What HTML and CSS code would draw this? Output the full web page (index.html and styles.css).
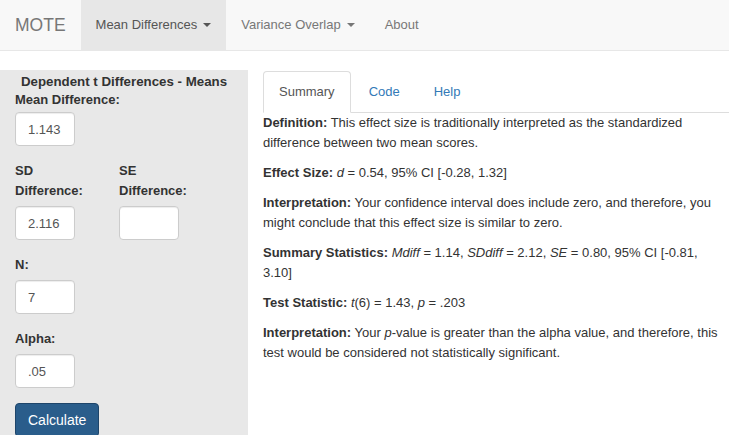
FILE: index.html
```html
<!DOCTYPE html>
<html lang="en">
<head>
<meta charset="utf-8">
<title>MOTE</title>
<link rel="stylesheet" href="styles.css">
</head>
<body>
<nav class="navbar">
  <a class="brand">MOTE</a>
  <ul class="nav">
    <li class="nav-item active"><a>Mean Differences<span class="caret"></span></a></li>
    <li class="nav-item"><a>Variance Overlap<span class="caret"></span></a></li>
    <li class="nav-item"><a>About</a></li>
  </ul>
</nav>
<div class="layout">
  <aside class="sidebar">
    <div class="side-title">Dependent t Differences - Means</div>
    <div class="group first">
      <label class="lbl">Mean Difference:</label>
      <input class="field" type="text" value="1.143">
    </div>
    <div class="pair">
      <div class="col">
        <div class="group">
          <label class="lbl narrow">SD Difference:</label>
          <input class="field" type="text" value="2.116">
        </div>
      </div>
      <div class="col">
        <div class="group">
          <label class="lbl narrow">SE Difference:</label>
          <input class="field" type="text" value="">
        </div>
      </div>
    </div>
    <div class="group">
      <label class="lbl">N:</label>
      <input class="field" type="text" value="7">
    </div>
    <div class="group">
      <label class="lbl">Alpha:</label>
      <input class="field" type="text" value=".05">
    </div>
    <button class="btn" type="button">Calculate</button>
  </aside>
  <main class="main">
    <ul class="tabs">
      <li class="tab active"><a>Summary</a></li>
      <li class="tab"><a>Code</a></li>
      <li class="tab"><a>Help</a></li>
    </ul>
    <div class="tab-content">
      <p><b>Definition:</b> This effect size is traditionally interpreted as the standardized difference between two mean scores.</p>
      <p><b>Effect Size:</b> <i>d</i> = 0.54, 95% CI [-0.28, 1.32]</p>
      <p><b>Interpretation:</b> Your confidence interval does include zero, and therefore, you might conclude that this effect size is similar to zero.</p>
      <p><b>Summary Statistics:</b> <i>Mdiff</i> = 1.14, <i>SDdiff</i> = 2.12, <i>SE</i> = 0.80, 95% CI [-0.81, 3.10]</p>
      <p><b>Test Statistic:</b> <i>t</i>(6) = 1.43, <i>p</i> = .203</p>
      <p><b>Interpretation:</b> Your <i>p</i>-value is greater than the alpha value, and therefore, this test would be considered not statistically significant.</p>
    </div>
  </main>
</div>
</body>
</html>
```

FILE: styles.css
```css
* { box-sizing: border-box; }

body {
  margin: 0;
  font-family: "Liberation Sans", Arial, sans-serif;
  font-size: 13px;
  line-height: 20px;
  color: #333;
  background: #fff;
}

/* navbar */
.navbar {
  display: flex;
  align-items: stretch;
  height: 51px;
  background: #f8f8f8;
  border-bottom: 1px solid #e7e7e7;
  margin-bottom: 19px;
}
.brand {
  padding: 15px 15px;
  font-size: 17.5px;
  line-height: 20px;
  color: #777;
}
.nav {
  display: flex;
  list-style: none;
  margin: 0;
  padding: 0;
}
.nav-item a {
  display: flex;
  align-items: center;
  height: 50px;
  padding: 0 15px;
  color: #777;
}
.nav-item.active a {
  background: #e7e7e7;
  color: #555;
}
.caret {
  display: inline-block;
  width: 0;
  height: 0;
  margin-left: 6px;
  border-top: 4px solid currentColor;
  border-left: 4px solid transparent;
  border-right: 4px solid transparent;
}

/* layout */
.layout {
  display: flex;
  align-items: flex-start;
}

.sidebar {
  flex: 0 0 248px;
  width: 248px;
  height: 365px;
  overflow: hidden;
  background: #e8e8e8;
  padding: 0 15px;
}
.side-title {
  padding-top: 4px;
  height: 20px;
  line-height: 16px;
  font-size: 13.3px;
  font-weight: bold;
  text-align: center;
  margin: 0 -15px;
}
.group {
  margin-bottom: 15px;
}
.lbl {
  display: block;
  font-weight: bold;
  margin-bottom: 5px;
  line-height: 20px;
}
.group.first .lbl {
  margin-bottom: 2px;
}
.lbl.narrow {
  width: 80px;
}
.pair {
  display: flex;
}
.col {
  width: 104px;
}
.field {
  display: block;
  width: 60px;
  height: 34px;
  padding: 6px 12px;
  font-family: "Liberation Sans", Arial, sans-serif;
  font-size: 13px;
  line-height: 20px;
  color: #555;
  background: #fff;
  border: 1px solid #ccc;
  border-radius: 4px;
  box-shadow: inset 0 1px 1px rgba(0, 0, 0, 0.075);
  outline: none;
}
.btn {
  display: block;
  height: 34px;
  padding: 6px 12px;
  font-family: "Liberation Sans", Arial, sans-serif;
  font-size: 14px;
  line-height: 20px;
  color: #fff;
  background: #2a5d8b;
  border: 1px solid #1e456a;
  border-radius: 4px;
}

/* main */
.main {
  flex: 1;
  margin-left: 15px;
  margin-top: 1px;
  min-width: 0;
}
.tabs {
  display: flex;
  list-style: none;
  margin: 0;
  padding: 0;
  border-bottom: 1px solid #ddd;
}
.tab {
  margin-right: 2px;
  margin-bottom: -1px;
}
.tab a {
  display: block;
  padding: 10px 15px;
  line-height: 20px;
  border: 1px solid transparent;
  border-radius: 4px 4px 0 0;
  color: #337ab7;
}
.tab.active a {
  color: #555;
  background: #fff;
  border-color: #ddd #ddd transparent;
}
.tab-content p {
  margin: 0 0 10px;
}
```
